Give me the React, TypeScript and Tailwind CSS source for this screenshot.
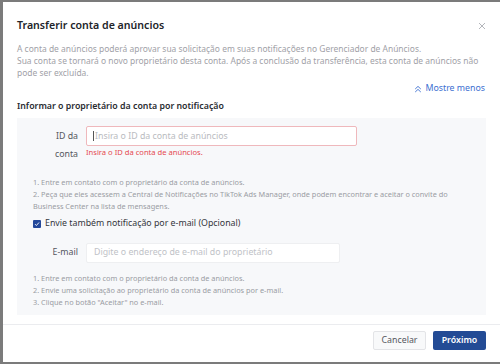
import React from 'react';

const FONT = { fontFamily: '"Noto Sans", "Open Sans", Arial, sans-serif' };

const idSteps = [
  '1. Entre em contato com o proprietário da conta de anúncios.',
  '2. Peça que eles acessem a Central de Notificações no TikTok Ads Manager, onde podem encontrar e aceitar o convite do Business Center na lista de mensagens.',
];

const mailSteps = [
  '1. Entre em contato com o proprietário da conta de anúncios.',
  '2. Envie uma solicitação ao proprietário da conta de anúncios por e-mail.',
  '3. Clique no botão "Aceitar" no e-mail.',
];

const Steps: React.FC<{ items: string[] }> = ({ items }) => (
  <div className="text-[7.35px] leading-[12px] text-[#9a9ca3] pr-[24px]">
    {items.map((s, i) => (
      <div key={i}>{s}</div>
    ))}
  </div>
);

export default function App() {
  return (
    <div className="w-[500px] h-[364px] bg-[#7b7b7b] pl-[3px] pt-[2px] overflow-hidden" style={FONT}>
      <div className="w-[497px] h-[360px] bg-white flex flex-col">
        {/* Header */}
        <div className="flex items-center justify-between pl-[14px] pr-[14px] pt-[13px] h-[35px]">
          <h1 className="text-[10.6px] font-semibold text-[#22242a]">Transferir conta de anúncios</h1>
          <svg width="8" height="8" viewBox="0 0 8 8" className="text-[#b4b6bb]">
            <path d="M1 1L7 7M7 1L1 7" stroke="currentColor" strokeWidth="1" />
          </svg>
        </div>

        {/* Body */}
        <div className="px-[14px] pt-[6px]">
          <p className="text-[8.45px] leading-[12px] text-[#9fa1a7]">
            A conta de anúncios poderá aprovar sua solicitação em suas notificações no Gerenciador de Anúncios.
            <br />
            Sua conta se tornará o novo proprietário desta conta. Após a conclusão da transferência, esta conta de anúncios não pode ser excluída.
          </p>
          <div className="flex justify-end items-center gap-[3px] mt-[3px] mr-[1px] text-[8.8px] text-[#3c6fd1]">
            <svg width="8" height="8" viewBox="0 0 8 8">
              <path d="M1.2 4L4 1.4L6.8 4M1.2 7L4 4.4L6.8 7" stroke="currentColor" strokeWidth="0.9" fill="none" />
            </svg>
            <span>Mostre menos</span>
          </div>

          <div className="mt-[5px] text-[8.8px] font-semibold text-[#2a2c31]">
            Informar o proprietário da conta por notificação
          </div>

          {/* Panel */}
          <div className="mt-[5px] bg-[#f7f8fa] w-[469px] pt-[8px] pb-[7px] pl-[16px]">
            <div className="flex">
              <div className="w-[53px] shrink-0 text-right text-[8.8px] leading-[18px] text-[#55575d] pr-[8px] pt-[1px]">
                ID da<br />conta
              </div>
              <div className="flex flex-col">
                <div className="w-[271px] h-[20px] bg-white border border-[#efb8bc] rounded-[2px] flex items-center pl-[6px]">
                  <span className="w-px h-[10px] bg-[#555]" />
                  <span className="text-[8.8px] text-[#b9bbc0] ml-[1px]">Insira o ID da conta de anúncios</span>
                </div>
                <div className="text-[7.6px] text-[#e5484f] mt-[1px]">Insira o ID da conta de anúncios.</div>
              </div>
            </div>

            <div className="mt-[13px]">
              <Steps items={idSteps} />
            </div>

            <label className="flex items-center gap-[4px] mt-[5px] text-[8.8px] text-[#34363c]">
              <span className="w-[8px] h-[8px] bg-[#24489a] rounded-[1px] flex items-center justify-center">
                <svg width="6" height="6" viewBox="0 0 6 6">
                  <path d="M1 3.1L2.4 4.5L5 1.5" stroke="white" strokeWidth="0.9" fill="none" />
                </svg>
              </span>
              Envie também notificação por e-mail (Opcional)
            </label>

            <div className="flex items-center mt-[12px]">
              <div className="w-[53px] shrink-0 text-right text-[8.8px] text-[#55575d] pr-[8px]">E-mail</div>
              <div className="w-[254px] h-[20px] bg-white border border-[#eeeff1] rounded-[2px] flex items-center pl-[7px] text-[8.8px] text-[#c0c2c7]">
                Digite o endereço de e-mail do proprietário
              </div>
            </div>

            <div className="mt-[9px]">
              <Steps items={mailSteps} />
            </div>
          </div>
        </div>

        {/* Footer */}
        <div className="mt-auto border-t border-[#ebecef] h-[38px] flex items-start justify-end gap-[7px] pr-[14px] pt-[6px]">
          <button className="w-[53px] h-[19px] rounded-[2px] border border-[#e3e4e7] bg-[#f8f9fa] text-[8.8px] text-[#55575d]">
            Cancelar
          </button>
          <button className="w-[53px] h-[19px] rounded-[2px] bg-[#234b95] text-[8.8px] font-semibold text-white">
            Próximo
          </button>
        </div>
      </div>
    </div>
  );
}
